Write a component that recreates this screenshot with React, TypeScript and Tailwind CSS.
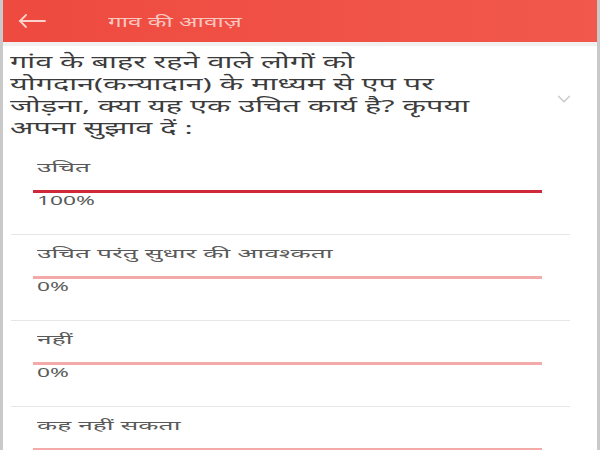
import { ChevronDown } from 'lucide-react'

type PollOption = {
  label: string
  percent: number
}

const options: PollOption[] = [
  { label: 'उचित', percent: 100 },
  { label: 'उचित परंतु सुधार की आवश्कता', percent: 0 },
  { label: 'नहीं', percent: 0 },
  { label: 'कह नहीं सकता', percent: 0 },
]

const questionLines = [
  'गांव के बाहर रहने वाले लोगों को',
  'योगदान(कन्यादान) के माध्यम से एप पर',
  'जोड़ना, क्या यह एक उचित कार्य है? कृपया',
  'अपना सुझाव दें :',
]

const OptionRow = ({ option }: { option: PollOption }) => (
  <div className="ml-[8px] mr-[27px] border-b border-[#e6e6e6]">
    <div className="pl-[22px] pr-[28px] pt-[8px] pb-[27px]">
      <p className="ml-[4px] w-fit origin-left scale-x-[2.03] text-[13px] leading-[20px] text-[#5a5a5a]">
        {option.label}
      </p>
      <div className="mt-[13px] h-[3px] w-full bg-[#f3aaa8]">
        <div className="h-full bg-[#cf2838]" style={{ width: `${option.percent}%` }} />
      </div>
      <p className="ml-[4px] w-fit origin-left scale-x-[1.75] text-[13px] leading-[14px] text-[#5a5a5a]">
        {option.percent}%
      </p>
    </div>
  </div>
)

export default function App() {
  return (
    <div
      className="h-[450px] w-[600px] overflow-hidden border-x-[3px] border-[#c9c9c9] bg-white"
      style={{ fontFamily: '"Noto Sans", "Noto Sans Devanagari", "Lohit Devanagari", sans-serif' }}
    >
      <header className="flex h-[42px] items-center bg-gradient-to-r from-[#ee4a3f] to-[#f2584c] shadow-[0_2px_3px_rgba(0,0,0,0.12)]">
        <svg className="ml-[15px] h-[14px] w-[28px]" viewBox="0 0 28 14" fill="none" stroke="#fbd3cc" strokeWidth="1.8" strokeLinecap="round">
          <path d="M27 7H2" />
          <path d="M8 1L2 7l6 6" />
        </svg>
        <h1 className="ml-[62px] origin-left scale-x-[1.62] text-[15px] text-[#f9c6c0]">गाव की आवाज़</h1>
      </header>
      <div className="h-[4px] bg-[#f1f1f1]" />
      <div className="flex items-center pl-[7px] pr-[22px] pt-[5px] pb-[10px]">
        <div className="flex-1 text-[17px] leading-[22px] text-[#3c3c3c]">
          {questionLines.map((line) => (
            <div key={line} className="w-fit origin-left scale-x-[1.8] whitespace-nowrap">
              {line}
            </div>
          ))}
        </div>
        <ChevronDown className="mt-[8px] h-[22px] w-[22px] text-[#c8c8c8]" strokeWidth={1.5} />
      </div>
      <div>
        {options.map((option) => (
          <OptionRow key={option.label} option={option} />
        ))}
      </div>
    </div>
  )
}
